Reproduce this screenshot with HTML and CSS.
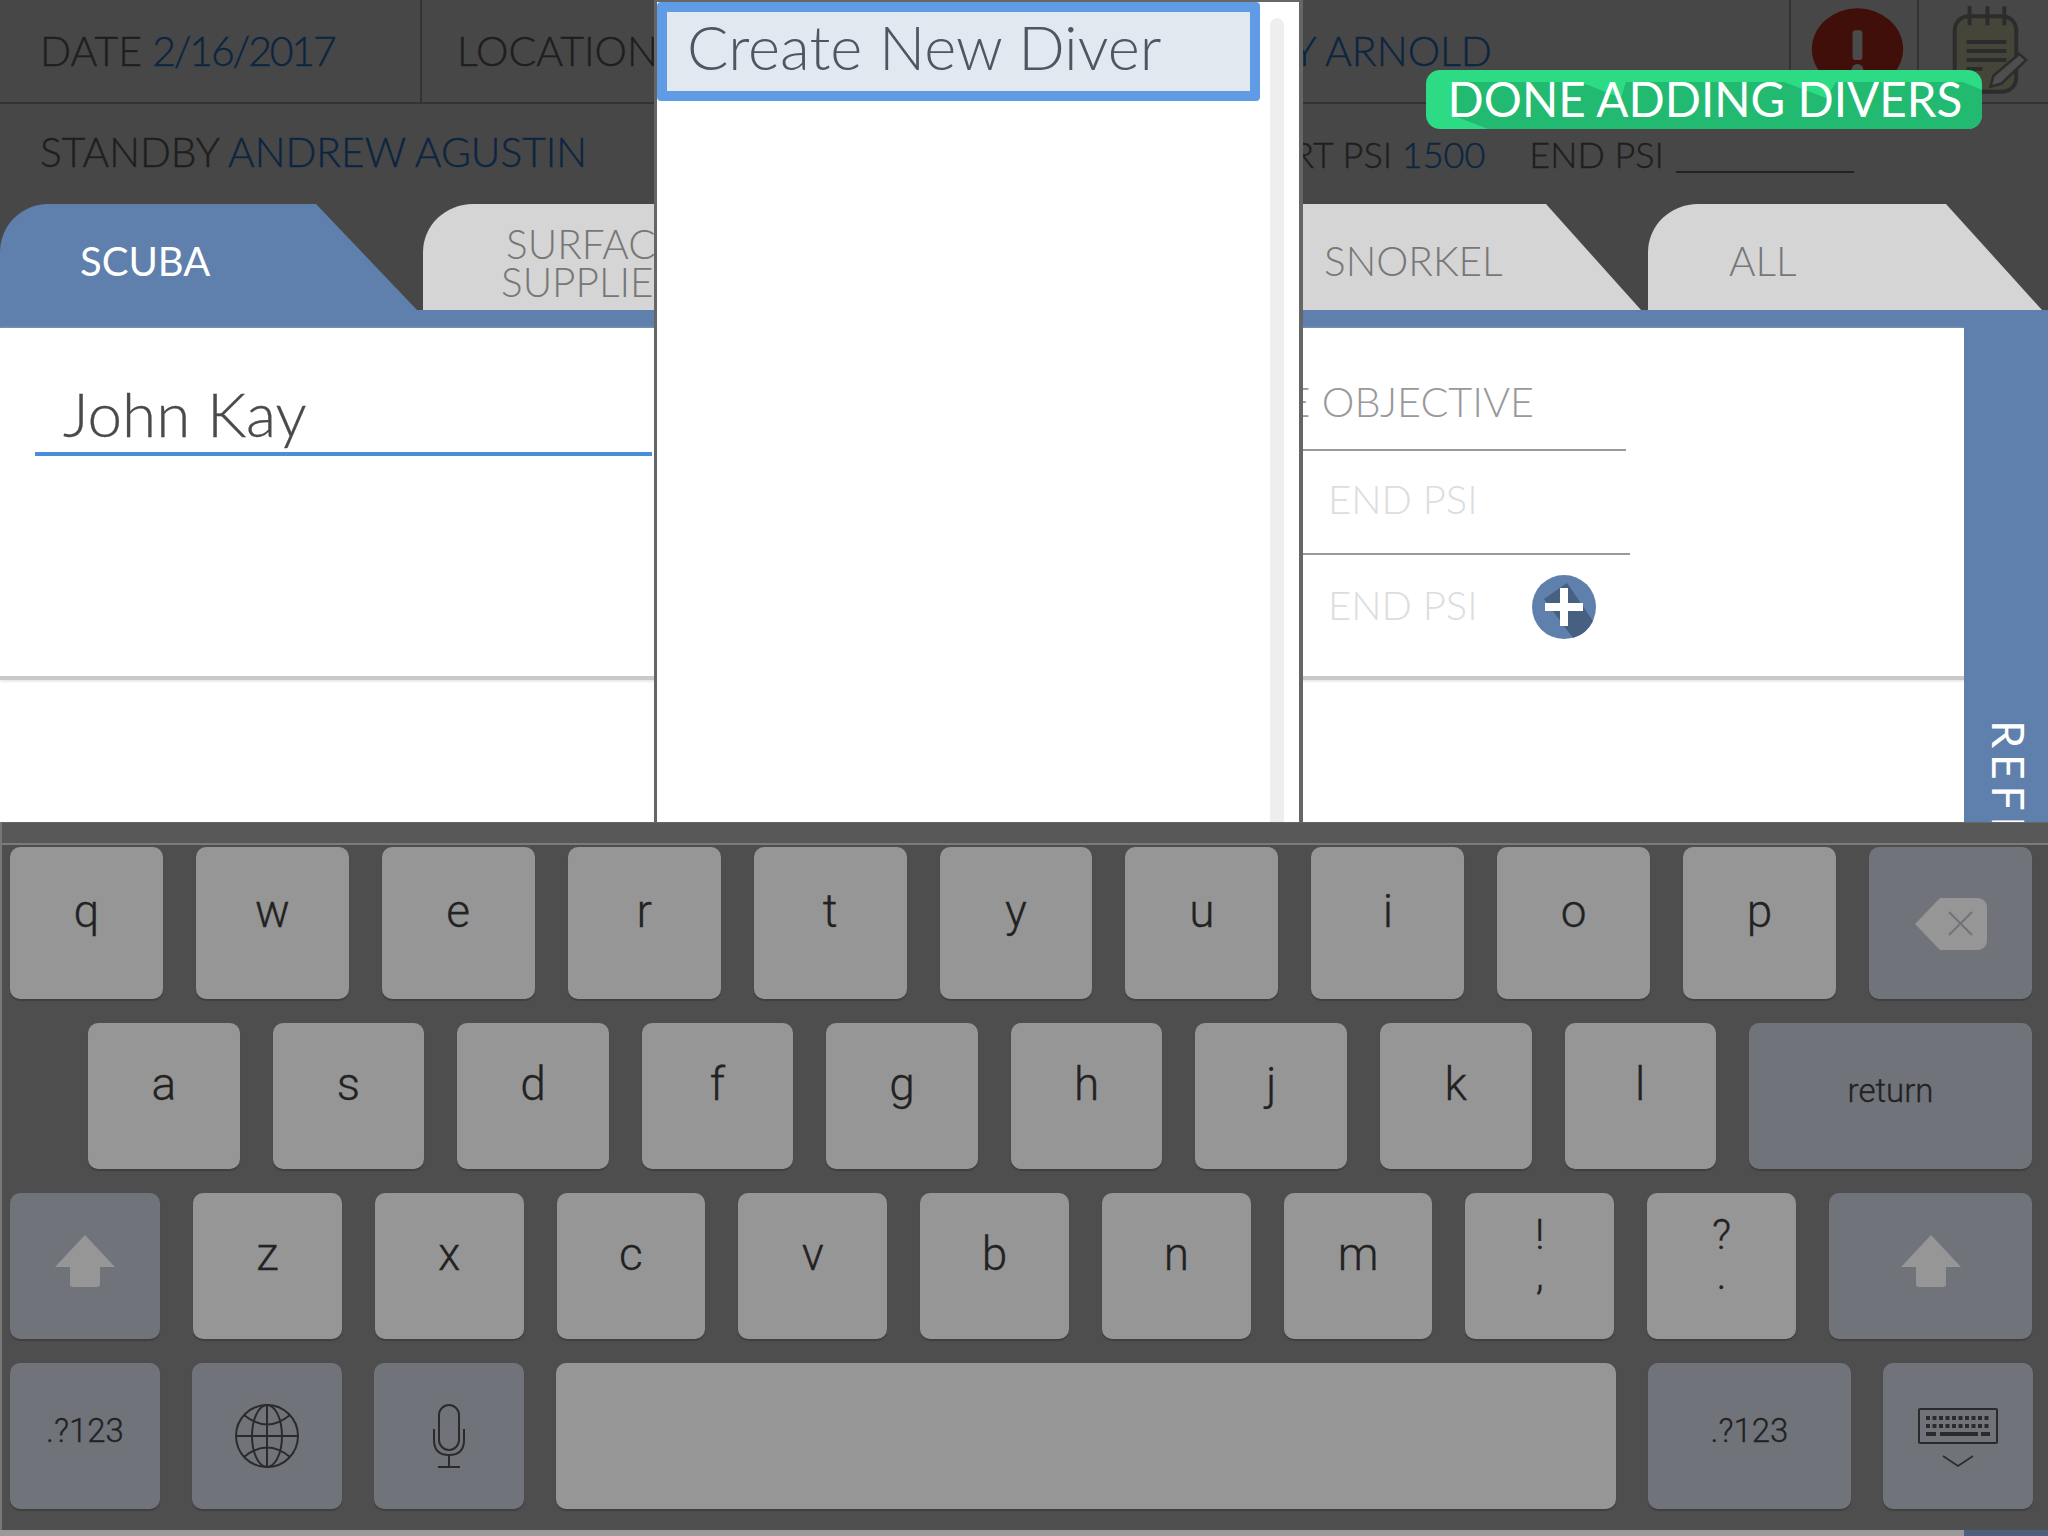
FILE: index.html
```html
<!DOCTYPE html>
<html lang="en">
<head>
  <meta charset="UTF-8" />
  <title>Dive Log</title>
  <link rel="stylesheet" href="styles.css">
</head>
<body>

  <div class="app">
    <header class="top-row">
      <div class="cell date">DATE <span class="val">2/16/2017</span></div>
      <div class="cell location">
        <span>LOCATION</span>
        <span class="val supervisor">Y ARNOLD</span>
      </div>
      <div class="cell icon-cell alert-cell">
        <svg width="127" height="102" viewBox="0 0 127 102">
          <ellipse cx="67" cy="49" rx="46" ry="41" fill="#400f0a"/>
          <rect x="62" y="30" width="10" height="30" rx="3" fill="#4a4a4a"/>
          <circle cx="67" cy="70" r="6" fill="#4a4a4a"/>
        </svg>
      </div>
      <div class="cell icon-cell note-cell">
        <svg width="130" height="102" viewBox="0 0 130 102">
          <rect x="36" y="16" width="62" height="76" rx="14" fill="#45453a" stroke="#2c2c2c" stroke-width="4"/>
          <path d="M51 6v19M69 6v19M86 6v19" stroke="#2c2c2c" stroke-width="4" fill="none"/>
          <path d="M48 42h40M48 51h40M48 60h40M48 69h16" stroke="#2c2c2c" stroke-width="4" fill="none"/>
          <path d="M101 54l7 6-25 24-11 3 3-11z" fill="#4e4e4e" stroke="#2c2c2c" stroke-width="2.5"/>
        </svg>
      </div>
    </header>

    <div class="second-row">
      <div class="standby">STANDBY <span class="val">ANDREW AGUSTIN</span></div>
      <div class="psi">
        <span>START PSI <span class="val">1500</span></span>
        <span class="end-psi">END PSI</span>
        <span class="blank"></span>
      </div>
    </div>

    <nav class="tabs">
      <div class="tab active">SCUBA</div>
      <div class="tab surface"><span class="tab-label">SURFACE<br>SUPPLIED</span></div>
      <div class="tab snorkel">SNORKEL</div>
      <div class="tab all">ALL</div>
    </nav>

    <div class="work">
      <div class="sheet">
        <div class="entry">
          <div class="diver-name">John Kay</div>
          <div class="fields">
            <div class="field objective">DIVE OBJECTIVE</div>
            <div class="field end-a">END PSI</div>
            <div class="field end-b">
              <span>END PSI</span>
              <svg class="plus" width="66" height="64" viewBox="0 0 66 64">
                <circle cx="33" cy="32" r="32" fill="#5f80ac"/>
                <path d="M36 8L62 46A32 32 0 0 1 42 63L13 24z" fill="#475f80"/>
                <path d="M29 13h8v15h15v8H37v15h-8V36H14v-8h15z" fill="#fff"/>
              </svg>
            </div>
          </div>
        </div>
      </div>
      <aside class="rail"><span>REFILL</span></aside>
    </div>

    <div class="keyboard">
      <div class="key-row row-one">
        <div class="key">q</div><div class="key">w</div><div class="key">e</div><div class="key">r</div><div class="key">t</div>
        <div class="key">y</div><div class="key">u</div><div class="key">i</div><div class="key">o</div><div class="key">p</div>
        <div class="key dark icon-key del">
          <svg width="72" height="52" viewBox="0 0 72 52">
            <path d="M0 26L25 0H63a9 9 0 0 1 9 9V43a9 9 0 0 1-9 9H25z" fill="#969696"/>
            <path d="M34 14L57 37M57 14L34 37" stroke="#70737a" stroke-width="2" fill="none"/>
          </svg>
        </div>
      </div>
      <div class="key-row row-two">
        <div class="key">a</div><div class="key">s</div><div class="key">d</div><div class="key">f</div><div class="key">g</div>
        <div class="key">h</div><div class="key">j</div><div class="key">k</div><div class="key">l</div>
        <div class="key dark small return">return</div>
      </div>
      <div class="key-row row-three">
        <div class="key dark icon-key shift">
          <svg width="60" height="52" viewBox="0 0 60 52">
            <path d="M30 0L60 32H45V49a3 3 0 0 1-3 3H18a3 3 0 0 1-3-3V32H0z" fill="#969696"/>
          </svg>
        </div>
        <div class="key">z</div><div class="key">x</div><div class="key">c</div><div class="key">v</div><div class="key">b</div>
        <div class="key">n</div><div class="key">m</div>
        <div class="key stack"><span>!</span><span>,</span></div>
        <div class="key stack"><span>?</span><span>.</span></div>
        <div class="key dark icon-key shift wide">
          <svg width="60" height="52" viewBox="0 0 60 52">
            <path d="M30 0L60 32H45V49a3 3 0 0 1-3 3H18a3 3 0 0 1-3-3V32H0z" fill="#969696"/>
          </svg>
        </div>
      </div>
      <div class="key-row row-four">
        <div class="key dark small numbers">.?123</div>
        <div class="key dark icon-key">
          <svg width="64" height="64" viewBox="0 0 64 64" fill="none" stroke="#2b2b2b" stroke-width="2">
            <ellipse cx="32" cy="32" rx="31" ry="31"/>
            <ellipse cx="32" cy="32" rx="15" ry="31"/>
            <path d="M32 1V63M1 32H63M9 11Q32 30 55 11M9 53Q32 34 55 53"/>
          </svg>
        </div>
        <div class="key dark icon-key">
          <svg width="32" height="64" viewBox="0 0 32 64" fill="none" stroke="#2b2b2b" stroke-width="2">
            <rect x="6" y="1" width="20" height="45" rx="10"/>
            <path d="M1 25V36Q1 51 16 51Q31 51 31 36V25M16 51V63M5 63H27"/>
          </svg>
        </div>
        <div class="key space"></div>
        <div class="key dark small numbers wide">.?123</div>
        <div class="key dark icon-key hide-kb">
          <svg width="80" height="60" viewBox="0 0 80 60" fill="none">
            <rect x="1" y="1" width="78" height="34" rx="1" stroke="#2b2b2b" stroke-width="2"/>
            <path d="M8 10H72M8 18H72" stroke="#2b2b2b" stroke-width="4" stroke-dasharray="4 2.5"/>
            <path d="M8 26H18M22 26H60M63 26H72" stroke="#2b2b2b" stroke-width="4"/>
            <path d="M25 48L40 58L55 48" stroke="#2b2b2b" stroke-width="1.6"/>
          </svg>
        </div>
      </div>
    </div>

    <div class="home-bar"></div>
  </div>

  <section class="picker">
    <div class="picker-list">
      <div class="create-diver">Create New Diver</div>
    </div>
    <div class="picker-track"></div>
  </section>

  <button class="done-btn"><span>DONE ADDING DIVERS</span></button>

</body>
</html>
```

FILE: styles.css
```css
* {
  box-sizing: border-box;
}
html, body {
  margin: 0;
  padding: 0;
}
body {
  position: relative;
  width: 2048px;
  height: 1536px;
  overflow: hidden;
  font-family: Lato, 'Open Sans', sans-serif;
  font-weight: 300;
  background-color: #474747;
  color: #1e1e1e;
}
.val {
  color: #0c2540;
}

/* header rows */
.top-row {
  display: flex;
  height: 104px;
  border-bottom: 2px solid #333;
}
.cell {
  display: flex;
  align-items: center;
  font-size: 41px;
  padding-bottom: 1px;
  white-space: nowrap;
  -webkit-text-stroke: 0.4px;
}
.date {
  display: block;
  width: 422px;
  padding: 26px 0 0 40px;
  border-right: 2px solid #333;
}
.date .val {
  letter-spacing: -2.2px;
  margin-left: -1px;
}
.location {
  flex: 1;
  padding-left: 35px;
  padding-right: 297px;
  justify-content: space-between;
}
.icon-cell {
  padding: 0;
  align-items: flex-start;
  height: 102px;
  border-left: 2px solid #333;
}
.alert-cell {
  width: 128px;
}
.note-cell {
  width: 131px;
}
.second-row {
  display: flex;
  justify-content: space-between;
  height: 100px;
  padding: 0 194px 0 40px;
  -webkit-text-stroke: 0.4px;
}
.standby {
  font-size: 40.7px;
  padding-top: 23px;
}
.psi {
  display: flex;
  align-items: flex-start;
  font-size: 36px;
  padding-top: 28px;
}
.end-psi {
  margin-left: 44px;
}
.blank {
  width: 178px;
  height: 41px;
  margin-left: 12px;
  border-bottom: 2px solid #222;
}

/* tabs */
.tabs {
  display: flex;
  height: 106px;
}
.tab {
  height: 106px;
  padding: 34px 0 0 81px;
  background-color: #d5d5d5;
  color: #777;
  font-size: 40.5px;
  line-height: 1.15;
  border-top-left-radius: 50px 48px;
}
.tab.active {
  width: 417px;
  padding-left: 80px;
  background-color: #5f80ac;
  color: #fff;
  font-size: 40px;
  font-weight: 400;
  border-top-left-radius: 48px;
  clip-path: polygon(0 0, 316px 0, 100% 100%, 0 100%);
}
.tab.surface {
  width: 420px;
  margin-left: 6px;
  padding: 21px 0 0 78px;
  line-height: 38px;
}
.tab-label {
  display: inline-block;
  text-align: center;
}
.tab.snorkel {
  width: 398px;
  margin-left: 400px;
  clip-path: polygon(0 0, 303px 0, 100% 100%, 0 100%);
}
.tab.all {
  width: 394px;
  margin-left: 7px;
  clip-path: polygon(0 0, 298px 0, 100% 100%, 0 100%);
}

/* main sheet */
.work {
  display: flex;
  height: 512px;
  border-top: 18px solid #5f80ac;
}
.sheet {
  flex: 1;
  background-color: #fff;
}
.entry {
  display: flex;
  justify-content: space-between;
  height: 352px;
  border-bottom: 4px solid #c9c9c9;
  box-shadow: 0 1px 3px #ddd;
}
.diver-name {
  width: 617px;
  height: 128px;
  margin-left: 35px;
  padding: 49px 0 0 28px;
  border-bottom: 4px solid #4a8ddd;
  font-size: 62px;
  line-height: 72px;
  color: #4a4a4a;
  -webkit-text-stroke: 0.3px;
}
.fields {
  width: 630px;
  margin-right: 334px;
  font-size: 40px;
  color: #ddd;
}
.field {
  padding-left: 328px;
}
.objective {
  width: 626px;
  height: 123px;
  padding: 48px 92px 0 0;
  font-size: 41.3px;
  text-align: right;
  border-bottom: 2px solid #999;
  color: #999;
}
.end-a {
  height: 104px;
  padding-top: 24px;
  border-bottom: 2px solid #999;
}
.end-b {
  display: flex;
  align-items: flex-start;
  padding-top: 26px;
}
.plus {
  margin: -6px 0 0 53px;
}
.rail {
  width: 84px;
  height: 100%;
  overflow: hidden;
  background-color: #5f80ac;
  color: #fff;
}
.rail span {
  display: block;
  writing-mode: vertical-rl;
  margin: 392px 0 0 20px;
  font-size: 45px;
  font-weight: 400;
  line-height: 50px;
  letter-spacing: 5.5px;
}

/* keyboard */
.keyboard {
  height: 708px;
  background: linear-gradient(#585858 0, #585858 20px, #7b7b7b 20px, #7b7b7b 22px, #4e4e4e 22px);
  border-left: 2px solid #777;
  border-top: 1px solid #666;
  padding: 24px 16px 0 8px;
  font-family: Roboto, 'Liberation Sans', sans-serif;
  font-weight: 300;
  color: #222;
  -webkit-text-stroke: 0.3px;
}
.key-row {
  display: flex;
  gap: 33px;
  height: 146px;
  margin-bottom: 24px;
}
.row-one {
  height: 152px;
}
.row-two {
  padding-left: 78px;
}
.row-four {
  gap: 32px;
}
.key {
  flex: 1;
  display: flex;
  align-items: center;
  justify-content: center;
  padding-bottom: 24px;
  border-radius: 10px;
  background-color: #969696;
  box-shadow: 0 2px 1px #404040;
  font-size: 46px;
}
.key.dark {
  background-color: #70737a;
}
.key.small {
  font-size: 33px;
  padding-bottom: 12px;
}
.key.icon-key {
  padding-bottom: 0;
}
.key.del {
  flex: none;
  width: 163px;
  padding-top: 2px;
}
.return {
  flex: none;
  width: 283px;
}
.key.shift {
  flex: none;
  width: 150px;
  padding-bottom: 10px;
}
.key.shift.wide {
  width: 203px;
}
.key.stack {
  flex-direction: column;
  font-size: 42px;
  line-height: 40px;
  padding-bottom: 22px;
}
.row-four .key {
  flex: none;
  width: 150px;
}
.row-four .space {
  width: 1060px;
}
.row-four .numbers.wide {
  width: 203px;
}
.key.hide-kb {
  padding-top: 4px;
}
.home-bar {
  position: absolute;
  left: 0;
  top: 1530px;
  width: 2048px;
  height: 6px;
  background: linear-gradient(90deg, #999 1964px, #4b607c 1964px);
}

/* diver picker, floats over the page */
.picker {
  position: absolute;
  left: 654px;
  top: 0;
  display: flex;
  width: 649px;
  height: 822px;
  background-color: #fff;
  border: solid #666;
  border-width: 2px 4px 0 3px;
}
.picker-list {
  width: 603px;
}
.create-diver {
  height: 99px;
  padding-left: 20px;
  border: 10px solid #609ce6;
  border-radius: 4px;
  background-color: #e1e8f0;
  color: #4f5660;
  font-size: 61.3px;
  line-height: 68px;
}
.picker-track {
  width: 14px;
  height: 804px;
  margin: 16px 0 0 10px;
  border-radius: 7px 7px 0 0;
  background-color: #eee;
}
.done-btn {
  position: absolute;
  left: 1426px;
  top: 70px;
  width: 556px;
  height: 59px;
  padding: 0 0 5px 2px;
  border: none;
  border-radius: 14px;
  overflow: hidden;
  background-color: #2ddb85;
  color: #fff;
  font-family: Lato, sans-serif;
  font-size: 47.6px;
  font-weight: 400;
}
.done-btn::before {
  content: "";
  position: absolute;
  left: 0;
  top: 0;
  width: 100%;
  height: 100%;
  background-color: #22b970;
  clip-path: polygon(26px 12px, 154px 12px, 195px 28px, 200px 12px, 358px 12px, 400px 28px, 410px 12px, 537px 12px, 556px 20px, 556px 59px, 62px 59px, 26px 45px);
}
.done-btn span {
  position: relative;
}
```
